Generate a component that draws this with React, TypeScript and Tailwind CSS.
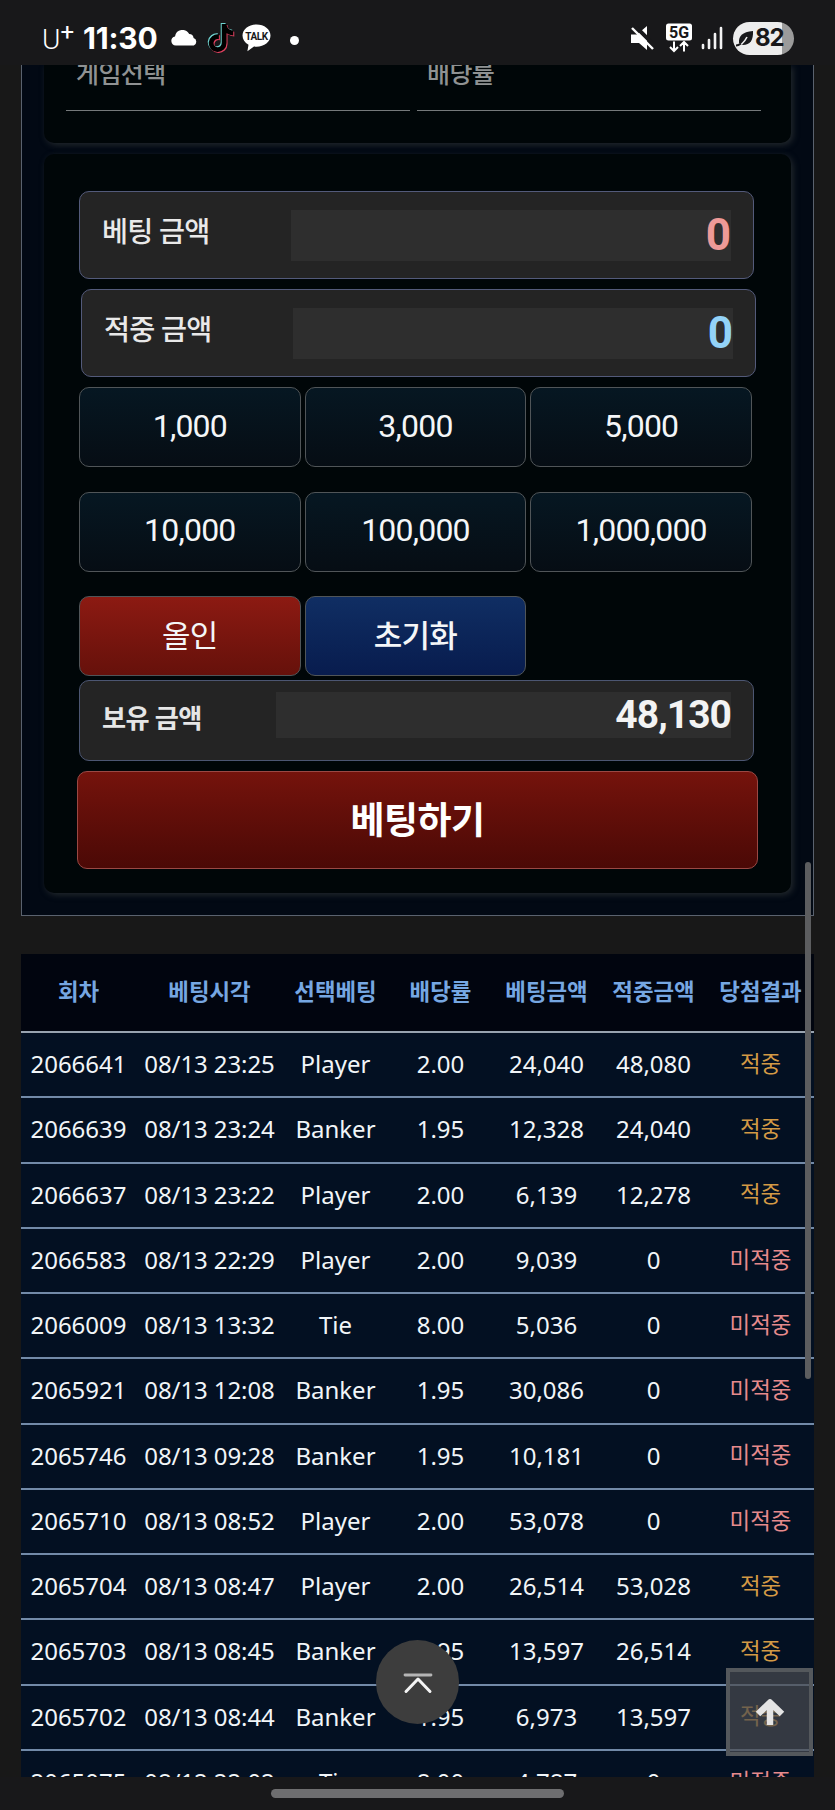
import { FaTiktok } from "react-icons/fa6";
import { clsx } from "clsx";

type Bet = {
  round: string;
  time: string;
  pick: string;
  odds: string;
  amount: string;
  win: string;
  hit: boolean;
};

const bets: Bet[] = [
  { round: "2066641", time: "08/13 23:25", pick: "Player", odds: "2.00", amount: "24,040", win: "48,080", hit: true },
  { round: "2066639", time: "08/13 23:24", pick: "Banker", odds: "1.95", amount: "12,328", win: "24,040", hit: true },
  { round: "2066637", time: "08/13 23:22", pick: "Player", odds: "2.00", amount: "6,139", win: "12,278", hit: true },
  { round: "2066583", time: "08/13 22:29", pick: "Player", odds: "2.00", amount: "9,039", win: "0", hit: false },
  { round: "2066009", time: "08/13 13:32", pick: "Tie", odds: "8.00", amount: "5,036", win: "0", hit: false },
  { round: "2065921", time: "08/13 12:08", pick: "Banker", odds: "1.95", amount: "30,086", win: "0", hit: false },
  { round: "2065746", time: "08/13 09:28", pick: "Banker", odds: "1.95", amount: "10,181", win: "0", hit: false },
  { round: "2065710", time: "08/13 08:52", pick: "Player", odds: "2.00", amount: "53,078", win: "0", hit: false },
  { round: "2065704", time: "08/13 08:47", pick: "Player", odds: "2.00", amount: "26,514", win: "53,028", hit: true },
  { round: "2065703", time: "08/13 08:45", pick: "Banker", odds: "1.95", amount: "13,597", win: "26,514", hit: true },
  { round: "2065702", time: "08/13 08:44", pick: "Banker", odds: "1.95", amount: "6,973", win: "13,597", hit: true },
  { round: "2065075", time: "08/12 22:02", pick: "Tie", odds: "8.00", amount: "4,787", win: "0", hit: false },
];

const headers = ["회차", "베팅시각", "선택베팅", "배당률", "베팅금액", "적중금액", "당첨결과"];
const amounts = ["1,000", "3,000", "5,000", "10,000", "100,000", "1,000,000"];

const tableCols = "grid grid-cols-[115px_147px_105px_105px_107px_107px_107px]";

function StatusBar() {
  return (
    <header className="flex h-[65px] shrink-0 items-start bg-[#18181a] pl-[42px] pr-[41px] pt-[21px] text-white">
      <div className="flex h-[34px] items-center">
        <div className="flex w-[41px] items-start font-[Roboto,sans-serif] leading-none">
          <span className="pt-[3px] text-[28px] font-light">U</span>
          <span className="-mt-[3px] text-[24px]">+</span>
        </div>
        <span className="w-[88px] font-[Inter,sans-serif] text-[30px] font-bold leading-none tracking-[-0.2px]">11:30</span>
        <svg className="h-[16px] w-[27px]" viewBox="0 0 27 16" fill="#fff">
          <path d="M4.8 15.5A4.6 4.6 0 0 1 4 6.4 7.6 7.6 0 0 1 18.2 4 4.6 4.6 0 0 1 22.6 8a4 4 0 0 1 .2 7.5z" />
        </svg>
        <div className="relative ml-[9px] h-[30px] w-[27px]">
          <FaTiktok className="absolute left-0 top-0 h-[28px] w-[26px] text-[#6fd3d0]" />
          <FaTiktok className="absolute left-[2px] top-[2px] h-[28px] w-[26px] text-[#e0405f]" />
          <FaTiktok className="absolute left-[1px] top-[1px] h-[28px] w-[26px] text-black" />
        </div>
        <svg className="ml-[8px] h-[28px] w-[29px]" viewBox="0 0 29 28">
          <path d="M14.5.5C6.7.5.5 5.4.5 11.6c0 4 2.3 7.2 6 9.2L5.4 27.2l6.6-4.6c.8.1 1.6.2 2.5.2 7.8 0 14-4.9 14-11.2S22.3.5 14.5.5z" fill="#fff" />
          <text x="14.5" y="15.5" textAnchor="middle" fontSize="10" fontWeight="700" fontFamily="Roboto, sans-serif" letterSpacing="-0.4" fill="#18181a">
            TALK
          </text>
        </svg>
        <span className="ml-[19px] mt-1 h-[9px] w-[9px] rounded-full bg-white" />
      </div>

      <div className="ml-auto flex h-[34px] items-center">
        <svg className="h-[24px] w-[24px]" viewBox="0 0 24 24">
          <path d="M1 8.5h6L17 0v24L9 17H1z" fill="#fff" />
          <path d="M2-3l24 24" stroke="#18181a" strokeWidth="4" />
          <path d="M2 2l21 21" stroke="#fff" strokeWidth="2.4" />
        </svg>
        <svg className="ml-[11px] h-[30px] w-[28px]" viewBox="0 0 28 30">
          <rect x="1" y="0.5" width="26" height="17" rx="2.5" fill="#fff" />
          <text x="14" y="14.5" textAnchor="middle" fontSize="16" fontWeight="700" fontFamily="Roboto, sans-serif" fill="#18181a">
            5G
          </text>
          <path d="M9 18.5v9M5 24l4 4 4-4M19 28.5v-9M15 23l4-4 4 4" fill="none" stroke="#fff" strokeWidth="2" />
        </svg>
        <svg className="ml-[8px] h-[24px] w-[22px]" viewBox="0 0 22 24" fill="none" strokeWidth="2.6" strokeLinecap="round">
          <path d="M2 19v3M8 14v8M14 8v14M20 2v20" stroke="#f2f2f2" />
        </svg>
        <div className="ml-[10px] flex h-[33px] w-[61px] items-center rounded-full bg-[linear-gradient(90deg,#ededed_81%,#9b9b9b_81%)] pl-[3px] text-[#18181a]">
          <svg className="h-[17px] w-[18px] shrink-0" viewBox="0 0 18 17">
            <path d="M3 13C2.5 6 6 2 17 1c.5 9-3 14-10 14z" fill="#18181a" />
            <path d="M0 16c4 0 8-3 11-9" fill="none" stroke="#ededed" strokeWidth="1.6" />
            <path d="M0 15.5c2 0 3-.5 5-2" fill="none" stroke="#18181a" strokeWidth="1.8" />
          </svg>
          <span className="ml-[1px] font-[Inter,sans-serif] text-[24px] font-bold leading-none tracking-[-1px]">82</span>
        </div>
      </div>
    </header>
  );
}

function AmountButton({ label, className }: { label: string; className?: string }) {
  return (
    <button
      className={clsx(
        "flex h-20 items-center justify-center rounded-[10px] border border-[#505558] tracking-tight text-[#f4f6f8]",
        className ?? "bg-linear-to-b from-[#061722] to-[#060d14] pb-[3px] text-[32px]"
      )}
    >
      {label}
    </button>
  );
}

function AmountBox({ label, value, color, className }: { label: string; value: string; color: string; className?: string }) {
  return (
    <div
      className={clsx(
        "flex h-[88px] w-[675px] items-center justify-between rounded-[10px] border border-[#535a7a] bg-[#242424] pl-[22px] pr-[22px]",
        className
      )}
    >
      <span className="pb-[3px] text-[28.3px] font-medium tracking-tight text-[#e9e9e9]">{label}</span>
      <div className={clsx("flex h-[51px] w-[440px] items-center justify-end bg-[#2e2e2e] text-[44px] font-bold leading-none", color)}>
        {value}
      </div>
    </div>
  );
}

function BettingPanel() {
  return (
    <section className="mx-[21px] border border-t-0 border-[#5a626e] bg-[#020914] px-[22px] pb-[22px]">
      <div className="flex h-[78px] gap-[7px] rounded-b-[10px] bg-[#000608] px-[22px] shadow-[2px_2px_6px_#23292d]">
        <div className="h-[46px] flex-1 border-b border-[#75797b] pl-[10px] text-[25px] font-medium leading-[20px] tracking-tight text-[#8f9293]">
          게임선택
        </div>
        <div className="mr-[8px] h-[46px] flex-1 border-b border-[#75797b] pl-[10px] text-[25px] font-medium leading-[20px] tracking-tight text-[#8f9293]">
          배당률
        </div>
      </div>

      <div className="mt-[11px] h-[739px] rounded-[10px] bg-[#000608] pl-[35px] pt-[37px] shadow-[2px_2px_6px_#23292d]">
        <AmountBox label="베팅 금액" value="0" color="text-[#ee9a97]" />
        <AmountBox label="적중 금액" value="0" color="text-[#93d3f8]" className="ml-[2px] mt-[10px]" />

        <div className="mt-[10px] grid w-[673px] grid-cols-3 gap-x-1 gap-y-[24.5px]">
          {amounts.map((a) => (
            <AmountButton key={a} label={a} />
          ))}
          <AmountButton label="올인" className="bg-linear-to-b from-[#8c1a12] to-[#66110b] pt-[2px] text-[31px]" />
          <AmountButton label="초기화" className="bg-linear-to-b from-[#102e63] to-[#081c4e] pt-[2px] text-[31px] font-medium" />
        </div>

        <div className="mt-1 flex h-[81px] w-[675px] items-start justify-between rounded-[10px] border border-[#4c5672] bg-[#242424] pl-[22px] pr-[22px] pt-[11px]">
          <span className="pt-[7px] text-[26.2px] font-bold leading-[40px] tracking-tight text-[#e6e6e6]">보유 금액</span>
          <div className="flex h-[46px] w-[455px] items-center justify-end bg-[#2e2e2e] text-[39px] font-bold leading-none tracking-tight text-[#f3f3f3]">
            48,130
          </div>
        </div>

        <button className="-ml-[2px] mt-[10px] flex h-[98px] w-[681px] items-center justify-center rounded-[10px] border border-[#9a4844] bg-linear-to-b from-[#75130c] to-[#4b0906] pt-[4px] text-[37px] font-bold tracking-[-0.5px] text-white">
          베팅하기
        </button>
      </div>
    </section>
  );
}

function BetHistory() {
  return (
    <section className="mx-[21px] mt-[38px] bg-[#031022] text-center">
      <div className={clsx(tableCols, "h-[79px] items-center whitespace-nowrap border-b-2 border-[#98a3b0] bg-[#01050f] pb-[3px] font-['Noto_Sans_CJK_KR',sans-serif] text-[22.4px] font-bold text-[#76a7e2]")}>
        {headers.map((h) => (
          <span key={h}>{h}</span>
        ))}
      </div>
      {bets.map((b) => (
        <div
          key={b.round}
          className={clsx(tableCols, "h-[65.25px] items-center whitespace-nowrap border-b-2 border-[#728aa8] pb-px font-['Noto_Sans','Noto_Sans_CJK_KR',sans-serif] text-[24px] leading-none text-[#f1f5f8]")}
        >
          <span>{b.round}</span>
          <span className="tracking-[-0.1px]">{b.time}</span>
          <span>{b.pick}</span>
          <span>{b.odds}</span>
          <span>{b.amount}</span>
          <span>{b.win}</span>
          <span className={clsx("text-[22.4px]", b.hit ? "text-[#d39a45]" : "text-[#e68a8c]")}>
            {b.hit ? "적중" : "미적중"}
          </span>
        </div>
      ))}
    </section>
  );
}

export default function App() {
  return (
    <div className="relative flex h-[1810px] w-[835px] flex-col overflow-hidden bg-[#181818] font-[Roboto,'Noto_Sans_CJK_KR',sans-serif]">
      <StatusBar />
      <main className="h-[1712px] overflow-hidden">
        <BettingPanel />
        <BetHistory />
      </main>
      <footer className="flex h-[33px] items-center justify-center bg-[#18181a]">
        <div className="h-[9px] w-[293px] rounded-full bg-[#6e6e70]" />
      </footer>

      {/* scroll thumb */}
      <div className="absolute right-[24px] top-[862px] h-[517px] w-[6px] rounded-full bg-[#5c5d5f]" />

      {/* scroll to top, browser */}
      <button className="absolute left-[376px] top-[1640px] flex h-[84px] w-[83px] items-center justify-center rounded-full bg-[#3d3d3d]">
        <svg className="h-[24px] w-[32px]" viewBox="0 0 32 24" fill="none" strokeLinecap="round" strokeLinejoin="round">
          <path d="M3 5h26" stroke="#b5b5b5" strokeWidth="2.8" />
          <path d="M4 21.5L16 9l12 12.5" stroke="#f4f4f4" strokeWidth="3" />
        </svg>
      </button>

      {/* scroll to top, page */}
      <button className="absolute left-[726px] top-[1668px] flex h-[88px] w-[87px] items-center justify-center border-4 border-[#54585c] bg-[#4a4b50]/70">
        <svg className="h-[28px] w-[30px]" viewBox="0 0 30 28" fill="none" stroke="#e4e4e4" strokeWidth="6.5" strokeLinejoin="round">
          <path d="M15 27V5M3 16L15 4.5 27 16" />
        </svg>
      </button>
    </div>
  );
}
